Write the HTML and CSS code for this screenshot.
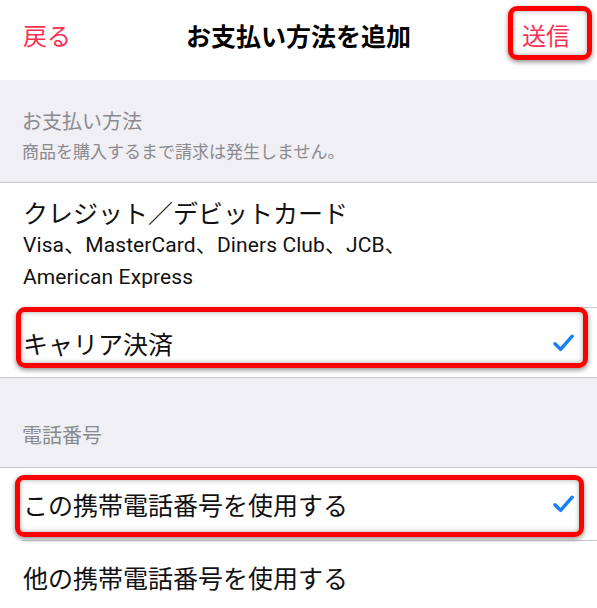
FILE: index.html
```html
<!DOCTYPE html>
<html lang="ja">
<head>
<meta charset="utf-8">
<link rel="stylesheet" href="styles.css">
</head>
<body>
<div class="screen">
  <header class="nav">
    <span class="nav-btn">戻る</span>
    <span class="nav-title">お支払い方法を追加</span>
    <span class="nav-btn send">送信<span class="mark mark-send"></span></span>
  </header>

  <section class="group-head tall">
    <div class="head-title">お支払い方法</div>
    <div class="head-sub">商品を購入するまで請求は発生しません。</div>
  </section>

  <div class="list">
    <div class="row card">
      <div class="row-title">クレジット／デビットカード</div>
      <div class="row-sub">Visa、MasterCard、Diners Club、JCB、<br>American Express</div>
    </div>
    <div class="divider"></div>
    <div class="row single carrier">
      <span class="row-title">キャリア決済</span>
      <svg class="check" width="21" height="18" viewBox="0 0 21 18"><path d="M2 9.8 L7.6 15.4 L19.2 2.2" fill="none" stroke="#157efb" stroke-width="3.4" stroke-linecap="round" stroke-linejoin="round"/></svg>
      <span class="mark mark-carrier"></span>
    </div>
  </div>

  <section class="group-head short">
    <div class="head-title">電話番号</div>
  </section>

  <div class="list">
    <div class="row single phone">
      <span class="row-title">この携帯電話番号を使用する</span>
      <svg class="check" width="21" height="18" viewBox="0 0 21 18"><path d="M2 9.8 L7.6 15.4 L19.2 2.2" fill="none" stroke="#157efb" stroke-width="3.4" stroke-linecap="round" stroke-linejoin="round"/></svg>
      <span class="mark mark-phone"></span>
    </div>
    <div class="divider"></div>
    <div class="row single other">
      <span class="row-title">他の携帯電話番号を使用する</span>
    </div>
  </div>
</div>
</body>
</html>
```
FILE: styles.css
```css
html, body {
  margin: 0;
  padding: 0;
  background: #ffffff;
}
body {
  font-family: "Roboto", "Noto Sans CJK JP", sans-serif;
  color: #111111;
  width: 597px;
  height: 608px;
  overflow: hidden;
}
.screen {
  width: 597px;
}
.nav {
  position: relative;
  height: 80px;
  box-sizing: border-box;
  padding: 0 27px 10px 23px;
  display: flex;
  align-items: center;
  justify-content: space-between;
  background: #ffffff;
}
.nav-btn {
  position: relative;
  font-family: "Noto Sans CJK JP", sans-serif;
  font-size: 24px;
  line-height: 30px;
  color: #fc2f52;
}
.nav-title {
  position: absolute;
  left: 0;
  right: 0;
  top: 20px;
  text-align: center;
  font-family: "Noto Sans CJK JP", sans-serif;
  font-weight: 700;
  font-size: 25px;
  line-height: 30px;
  color: #000000;
  pointer-events: none;
}
.group-head {
  background: #efeff4;
  box-sizing: border-box;
  padding: 0 22px;
  border-bottom: 1px solid #c8c7cc;
  color: #8a8a8f;
  font-family: "Noto Sans CJK JP", sans-serif;
}
.group-head.tall {
  height: 103px;
  padding-top: 27px;
}
.group-head.short {
  height: 91px;
  padding-top: 43px;
  border-top: 1px solid #c8c7cc;
}
.head-title {
  font-size: 20px;
  line-height: 28px;
}
.head-sub {
  font-size: 17px;
  line-height: 30px;
  margin-top: 1px;
}
.list {
  background: #ffffff;
}
.row {
  position: relative;
  box-sizing: border-box;
  padding: 0 23px 0 23px;
}
.row-title {
  font-family: "Noto Sans CJK JP", sans-serif;
  font-size: 25px;
  line-height: 34px;
  color: #111111;
}
.card {
  padding-top: 12px;
  padding-bottom: 14px;
}
.row-sub {
  font-size: 21px;
  line-height: 32px;
  letter-spacing: 0.1px;
  color: #111111;
}
.single {
  display: flex;
  align-items: center;
  justify-content: space-between;
}
.carrier {
  height: 69px;
}
.phone {
  height: 72px;
}
.other {
  height: 72px;
}
.check {
  display: block;
  flex: none;
}
.divider {
  height: 1px;
  margin-left: 22px;
  background: #c8c7cc;
}
.mark {
  position: absolute;
  box-sizing: border-box;
  border: 5px solid #ff0000;
  border-radius: 9px;
  box-shadow: 0 2px 5px rgba(0, 0, 0, 0.45), inset 0 0 5px rgba(0, 0, 0, 0.35);
  pointer-events: none;
}
.mark-send {
  left: -14px;
  top: -14px;
  width: 84px;
  height: 54px;
}
.mark-carrier {
  left: 16px;
  top: -1px;
  width: 572px;
  height: 61px;
}
.mark-phone {
  left: 15px;
  top: 7px;
  width: 569px;
  height: 62px;
}
```
